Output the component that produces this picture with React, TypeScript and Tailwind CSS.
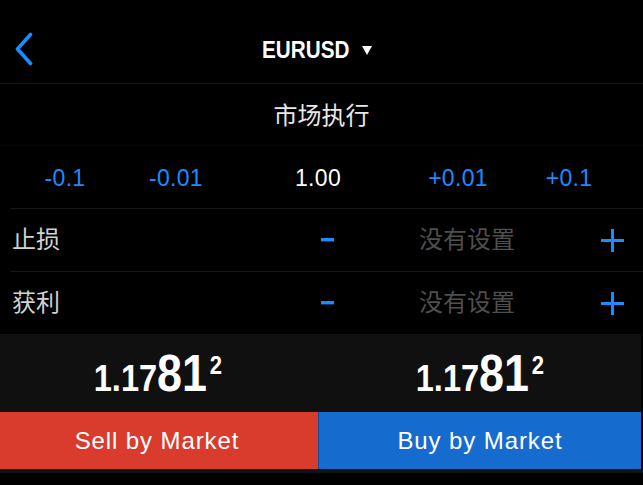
const sans = "font-['Liberation_Sans','Noto_Sans_CJK_SC',sans-serif]"

function BackChevron() {
  return (
    <svg width="20" height="34" viewBox="0 0 20 34" fill="none" aria-hidden>
      <path d="M16.5 2.5 L3.5 17 L16.5 31.5" stroke="#1a8cff" strokeWidth="3.6" strokeLinecap="round" strokeLinejoin="round" />
    </svg>
  )
}

function MinusIcon() {
  return (
    <svg width="13" height="4" viewBox="0 0 13 4" aria-hidden>
      <rect x="0" y="0" width="13" height="3.4" fill="#1a8cff" />
    </svg>
  )
}

function PlusGlyph() {
  return (
    <svg width="23" height="23" viewBox="0 0 23 23" aria-hidden>
      <rect x="0" y="10" width="23" height="3" fill="#1a8cff" />
      <rect x="10" y="0" width="3" height="23" fill="#1a8cff" />
    </svg>
  )
}

// condensed look: the reference uses a narrow bold face, squeeze Liberation Sans
function Price() {
  return (
    <div className="flex items-baseline text-white font-bold scale-x-[0.88] origin-center">
      <span className="text-[37px] leading-none">1.17</span>
      <span className="text-[51px] leading-none">81</span>
      <span className="text-[25px] leading-none relative -top-[17px] ml-[3px]">2</span>
    </div>
  )
}

function StopRow({ label }: { label: string }) {
  return (
    <div className="grid grid-cols-[300px_54px_226px_1fr] items-center h-[62px]">
      <span className="pl-[12px] text-[24px] text-[#d2d2d2]">{label}</span>
      <span className="flex justify-center"><MinusIcon /></span>
      <span className="text-center text-[24px] text-[#4f4f4f]">没有设置</span>
      <span className="flex justify-end pr-[19px]"><PlusGlyph /></span>
    </div>
  )
}

export default function App() {
  return (
    <div className={`w-[643px] h-[485px] bg-black overflow-hidden flex flex-col ${sans}`}>
      <header className="relative h-[84px] shrink-0 flex items-center justify-center pt-[17px] border-b border-[#161616]">
        <span className="absolute left-[14px] top-[32px]"><BackChevron /></span>
        <div className="flex items-center gap-[12px] pr-[9px]">
          <span className="text-[23px] font-bold text-white scale-x-[0.9] origin-left inline-block -mr-[10px]">EURUSD</span>
          <svg width="10" height="9" viewBox="0 0 10 9" aria-hidden>
            <polygon points="0,0 10,0 5,9" fill="#ffffff" />
          </svg>
        </div>
      </header>

      <div className="h-[62px] shrink-0 flex items-center justify-center pt-[2px] border-b border-[#080808]">
        <span className="text-[24px] text-[#e8e8e8]">市场执行</span>
      </div>

      <div className="h-[62px] shrink-0 grid grid-cols-[130px_92px_192px_88px_134px] items-center pt-[3px] text-[23px] tracking-[0.3px]">
        <span className="text-center text-[#1a8cff]">-0.1</span>
        <span className="text-center text-[#1a8cff]">-0.01</span>
        <span className="text-center text-white">1.00</span>
        <span className="text-center text-[#1a8cff]">+0.01</span>
        <span className="text-center text-[#1a8cff]">+0.1</span>
      </div>

      <div className="ml-[10px] h-px bg-[#161616] shrink-0" />
      <StopRow label="止损" />
      <div className="ml-[10px] h-px bg-[#161616] shrink-0" />
      <StopRow label="获利" />

      <div className="h-[78px] shrink-0 bg-[#101010] grid grid-cols-[318px_323px] items-center mr-[2px]">
        <div className="flex justify-center pr-[2px]"><Price /></div>
        <div className="flex justify-center"><Price /></div>
      </div>

      <div className="h-[57px] shrink-0 grid grid-cols-[318px_323px] mr-[2px] text-[24px] text-white tracking-[0.9px]">
        <button className="bg-[#d93c2c] flex items-center justify-center pr-[4px]">Sell by Market</button>
        <button className="bg-[#166bcf] flex items-center justify-center border-l border-[#0f4f9a]">Buy by Market</button>
      </div>

      <div className="h-[4px] shrink-0 bg-[#121212]" />
    </div>
  )
}
